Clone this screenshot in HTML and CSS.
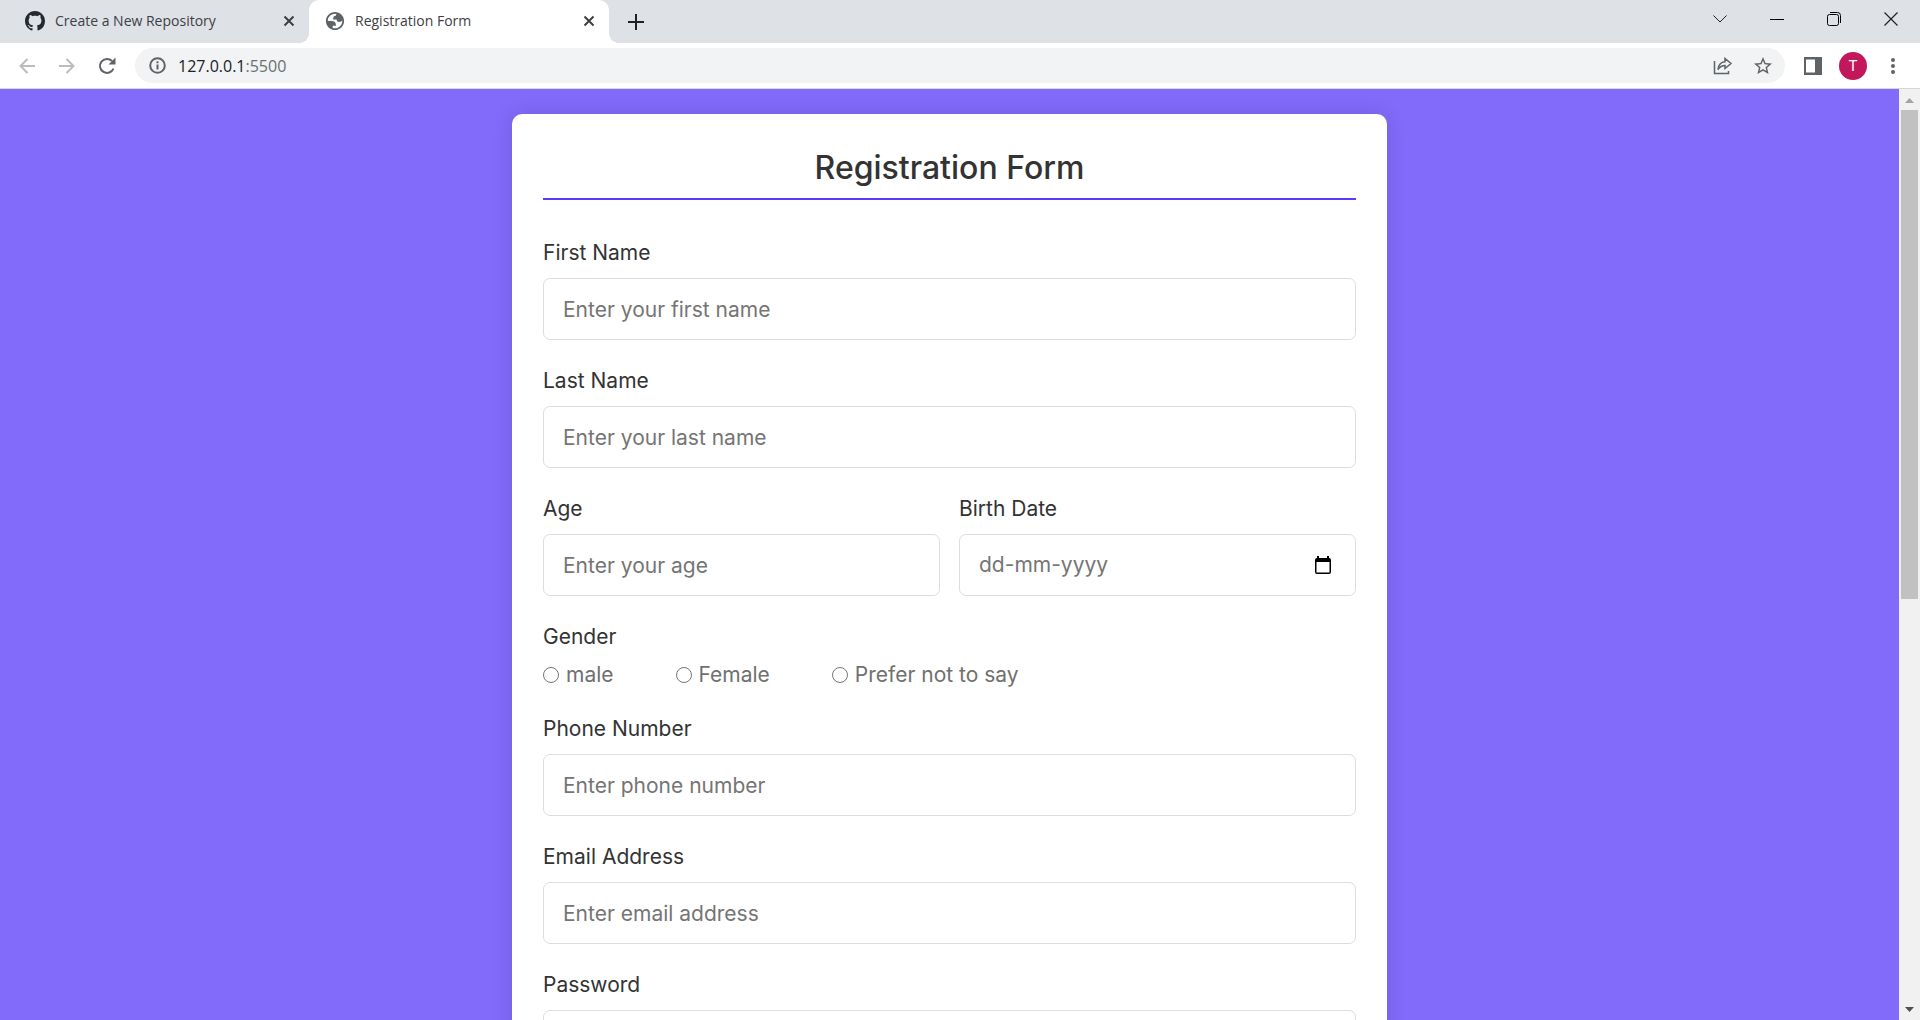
FILE: index.html
```html
<!DOCTYPE html>
<html lang="en">
<head>
<meta charset="utf-8">
<title>Registration Form</title>
<link rel="stylesheet" href="styles.css">
</head>
<body>
<header class="browser">
  <div class="tab-strip">
    <div class="tab">
      <svg class="favicon" viewBox="0 0 16 16" fill="#24292f"><path d="M8 0C3.58 0 0 3.58 0 8c0 3.54 2.29 6.53 5.47 7.59.4.07.55-.17.55-.38 0-.19-.01-.82-.01-1.49-2.01.37-2.53-.49-2.69-.94-.09-.23-.48-.94-.82-1.13-.28-.15-.68-.52-.01-.53.63-.01 1.08.58 1.23.82.72 1.21 1.87.87 2.33.66.07-.52.28-.87.51-1.07-1.78-.2-3.64-.89-3.64-3.95 0-.87.31-1.59.82-2.15-.08-.2-.36-1.02.08-2.12 0 0 .67-.21 2.2.82.64-.18 1.32-.27 2-.27s1.36.09 2 .27c1.53-1.04 2.2-.82 2.2-.82.44 1.1.16 1.92.08 2.12.51.56.82 1.27.82 2.15 0 3.07-1.87 3.75-3.65 3.95.29.25.54.73.54 1.48 0 1.07-.01 1.93-.01 2.2 0 .21.15.46.55.38A8.01 8.01 0 0 0 16 8c0-4.42-3.58-8-8-8z"/></svg>
      <span class="tab-title">Create a New Repository</span>
      <button class="icon-button" type="button" aria-label="Close tab"><svg class="close" viewBox="0 0 12 12"><path d="M1.500 1.500l9 9M10.500 1.500l-9 9"/></svg></button>
    </div>
    <div class="tab tab-active">
      <svg class="favicon" viewBox="1 1 22 22" fill="#5f6368"><path fill-rule="evenodd" d="M12 2C6.480 2 2 6.480 2 12s4.480 10 10 10 10-4.480 10-10S17.520 2 12 2zM4 12h4.400c3.407.022 4.922 1.730 4.543 5.127H9.488v2.470a8.004 8.004 0 0 0 10.498-8.083C19.327 12.504 18.332 13 17 13c-2.137 0-3.206-.916-3.206-2.750h-3.748c-.274-2.728.683-4.092 2.870-4.092 0-.975.327-1.597.811-1.970A8.004 8.004 0 0 0 4 12z"/></svg>
      <span class="tab-title">Registration Form</span>
      <button class="icon-button" type="button" aria-label="Close tab"><svg class="close" viewBox="0 0 12 12"><path d="M1.500 1.500l9 9M10.500 1.500l-9 9"/></svg></button>
    </div>
    <button class="icon-button new-tab" type="button" aria-label="New tab"><svg width="16" height="16" viewBox="0 0 16 16" stroke="#202124" stroke-width="2"><path d="M8 0v16M0 8h16"/></svg></button>
    <div class="window-controls">
      <button class="icon-button" type="button" aria-label="Search tabs"><svg width="14" height="14" viewBox="0 0 14 14" fill="none" stroke="#202124"><path d="M.5 3.500L7 10l6.500-6.500"/></svg></button>
      <button class="icon-button" type="button" aria-label="Minimize"><svg width="14" height="14" viewBox="0 0 14 14" stroke="#000"><path d="M0 7.500h14"/></svg></button>
      <button class="icon-button" type="button" aria-label="Restore"><svg width="14" height="14" viewBox="0 0 14 14" fill="none" stroke="#000"><rect x=".5" y="2.500" width="11" height="11" rx="2"/><path d="M3 .5h7.500a3 3 0 0 1 3 3V11"/></svg></button>
      <button class="icon-button" type="button" aria-label="Close window"><svg width="14" height="14" viewBox="0 0 14 14" stroke="#202124" stroke-width="1.200"><path d="M.5.5l13 13M13.500.5l-13 13"/></svg></button>
    </div>
  </div>
  <div class="toolbar">
    <nav class="tools" aria-label="History">
      <button class="icon-button" type="button" aria-label="Back" disabled><svg width="16" height="16" viewBox="0 0 16 16" fill="none" stroke="#babcbe" stroke-width="2"><path d="M16 8H1.500M8.500 1L1.500 8l7 7"/></svg></button>
      <button class="icon-button" type="button" aria-label="Forward" disabled><svg width="16" height="16" viewBox="0 0 16 16" fill="none" stroke="#babcbe" stroke-width="2"><path d="M0 8h14.500M7.500 1l7 7-7 7"/></svg></button>
      <button class="icon-button" type="button" aria-label="Reload"><svg width="18" height="18" viewBox="0 0 18 18" fill="none" stroke="#5f6368" stroke-width="2"><path d="M15.500 11.500A7 7 0 1 1 14 4"/><path d="M17.500.5v7h-7z" fill="#5f6368" stroke="none"/></svg></button>
    </nav>
    <div class="address-bar">
      <svg width="17" height="17" viewBox="0 0 17 17" fill="none" stroke="#5f6368" stroke-width="2"><circle cx="8.500" cy="8.500" r="7.300"/><path d="M8.500 7.500v5M8.500 4.300v2"/></svg>
      <div class="address" role="textbox" contenteditable="true" spellcheck="false" aria-label="Address">127.0.0.1<span class="port">:5500</span></div>
      <button class="icon-button" type="button" aria-label="Share"><svg width="20" height="18" viewBox="0 0 20 18" fill="none" stroke="#5f6368" stroke-width="1.500"><path d="M1.500 4v12.500h14V14M5 12.500c.5-5 3-7.500 7-7.800V1.500l6 5-6 5V8.500c-3 0-5 1-7 4z"/></svg></button>
      <button class="icon-button" type="button" aria-label="Bookmark"><svg width="18" height="18" viewBox="2 2 20 20" fill="#5f6368"><path d="M22 9.240l-7.190-.62L12 2 9.190 8.630 2 9.240l5.460 4.730L5.820 21 12 17.270 18.180 21l-1.630-7.030L22 9.240zM12 15.400l-3.760 2.270 1-4.280-3.320-2.880 4.380-.38L12 6.100l1.710 4.040 4.380.38-3.320 2.880 1 4.280L12 15.400z"/></svg></button>
    </div>
    <div class="tools">
      <button class="icon-button" type="button" aria-label="Side panel"><svg width="18" height="18" viewBox="0 0 18 18" fill="#5f6368"><path d="M0 0h18v18H0zM2 2.500v13h9v-13z" fill-rule="evenodd"/></svg></button>
      <button class="icon-button" type="button" aria-label="Profile"><span class="avatar">T</span></button>
      <button class="icon-button" type="button" aria-label="Menu"><svg width="4" height="16" viewBox="0 0 4 16" fill="#5f6368"><circle cx="2" cy="2" r="2"/><circle cx="2" cy="8" r="2"/><circle cx="2" cy="14" r="2"/></svg></button>
    </div>
  </div>
</header>
<div class="viewport">
  <main class="page">
    <form class="card">
      <h1 class="title">Registration Form</h1>
      <div class="field">
        <label class="label" for="first-name">First Name</label>
        <input class="input" id="first-name" type="text" placeholder="Enter your first name">
      </div>
      <div class="field">
        <label class="label" for="last-name">Last Name</label>
        <input class="input" id="last-name" type="text" placeholder="Enter your last name">
      </div>
      <div class="columns">
        <div class="field">
          <label class="label" for="age">Age</label>
          <input class="input" id="age" type="text" inputmode="numeric" placeholder="Enter your age">
        </div>
        <div class="field">
          <label class="label" for="birth-date">Birth Date</label>
          <div class="input date">
            <input class="date-text" id="birth-date" type="text" placeholder="dd-mm-yyyy">
            <button class="icon-button" type="button" aria-label="Choose date"><svg width="16" height="18" viewBox="0 0 16 18"><path d="M2 0h2v2h8V0h2v2a2 2 0 0 1 2 2v12a2 2 0 0 1-2 2H2a2 2 0 0 1-2-2V4a2 2 0 0 1 2-2zM1.500 6v10.500h13V6z" fill-rule="evenodd"/></svg></button>
          </div>
        </div>
      </div>
      <fieldset class="field">
        <legend class="label">Gender</legend>
        <div class="choices">
          <label class="choice"><input class="radio" type="radio" name="gender">male</label>
          <label class="choice"><input class="radio" type="radio" name="gender">Female</label>
          <label class="choice"><input class="radio" type="radio" name="gender">Prefer not to say</label>
        </div>
      </fieldset>
      <div class="field">
        <label class="label" for="phone">Phone Number</label>
        <input class="input" id="phone" type="tel" placeholder="Enter phone number">
      </div>
      <div class="field">
        <label class="label" for="email">Email Address</label>
        <input class="input" id="email" type="email" placeholder="Enter email address">
      </div>
      <div class="field">
        <label class="label" for="password">Password</label>
        <input class="input" id="password" type="password">
      </div>
    </form>
  </main>
  <div class="scrollbar" aria-hidden="true">
    <svg class="arrow" viewBox="0 0 21 21" fill="#a3a3a3"><path d="M6 14l4.500-5 4.500 5z"/></svg>
    <div class="track"><div class="thumb"></div></div>
    <svg class="arrow" viewBox="0 0 21 21" fill="#505050"><path d="M6 8l4.500 5L15 8z"/></svg>
  </div>
</div>
</body>
</html>
```
FILE: styles.css
```css
* {
  box-sizing: border-box;
}

body {
  margin: 0;
  height: 100vh;
  display: flex;
  flex-direction: column;
  overflow: hidden;
  font-family: Inter, "Liberation Sans", sans-serif;
}

button,
input {
  font: inherit;
}

.icon-button {
  display: flex;
  align-items: center;
  justify-content: center;
  padding: 0;
  border: 0;
  background: none;
  color: inherit;
}

/* Browser frame */

.browser {
  flex: none;
  font-family: "Open Sans", "Noto Sans", sans-serif;
  color: #3c4043;
}

.tab-strip {
  display: flex;
  height: 43px;
  padding-left: 9px;
  background: #dee1e6;
}

.tab {
  display: flex;
  align-items: center;
  gap: 10px;
  width: 300px;
  padding: 0 14px 2px 16px;
  font-size: 14px;
}

.tab-active {
  position: relative;
  border-radius: 10px 10px 0 0;
  background: #fff;
}

.tab-active::before,
.tab-active::after {
  content: "";
  position: absolute;
  bottom: 0;
  width: 10px;
  height: 10px;
}

.tab-active::before {
  right: 100%;
  background: radial-gradient(circle at 0 0, #dee1e6 10px, #fff 10px);
}

.tab-active::after {
  left: 100%;
  background: radial-gradient(circle at 100% 0, #dee1e6 10px, #fff 10px);
}

.favicon {
  width: 20px;
  height: 20px;
}

.tab-title {
  flex: 1;
}

.close {
  width: 12px;
  height: 12px;
  stroke: #3c4043;
  stroke-width: 2;
}

.new-tab {
  width: 54px;
}

.window-controls {
  display: flex;
  margin-left: auto;
  padding-right: 1px;
}

.window-controls .icon-button {
  width: 57px;
  height: 37px;
}

.toolbar {
  display: flex;
  gap: 8px;
  padding: 5px 7px;
  border-bottom: 1px solid #d5d7da;
  background: #fff;
}

.tools {
  display: flex;
}

.tools .icon-button,
.address-bar .icon-button {
  width: 40px;
}

.address-bar {
  flex: 1;
  display: flex;
  align-items: center;
  height: 35px;
  padding: 0 2px 0 14px;
  border-radius: 18px;
  background: #f1f3f4;
}

.address {
  flex: 1;
  padding-left: 12px;
  font-size: 16px;
  color: #202124;
}

.port {
  color: #6b6f73;
}

.avatar {
  width: 28px;
  border-radius: 50%;
  background: #c2185b;
  font-family: Roboto, sans-serif;
  font-size: 15px;
  line-height: 28px;
  color: #fff;
}

/* Page */

.viewport {
  flex: 1;
  min-height: 0;
  display: flex;
}

.page {
  flex: 1;
  overflow: hidden;
  padding: 25px;
  background: #826afb;
}

.card {
  max-width: 875px;
  margin: 0 auto;
  padding: 32px 31px;
  border-radius: 10px;
  background: #fff;
  box-shadow: 0 0 20px rgba(0, 0, 0, 0.12);
  font-size: 21px;
  line-height: 26px;
  color: #333;
}

.title {
  margin: 0 0 40px;
  padding-bottom: 8px;
  border-bottom: 2px solid #5a3bf6;
  font-size: 32px;
  font-weight: 500;
  line-height: 44px;
  text-align: center;
}

.field {
  margin: 0 0 28px;
  padding: 0;
  border: 0;
}

.label {
  display: block;
  margin-bottom: 12px;
  padding: 0;
}

.input {
  display: block;
  width: 100%;
  height: 62px;
  padding: 0 19px;
  border: 1px solid #ddd;
  border-radius: 7px;
  background: #fff;
  color: #707070;
}

.input::placeholder,
.date-text::placeholder {
  color: #757575;
}

.columns {
  display: grid;
  grid-template-columns: 1fr 1fr;
  gap: 19px;
}

.date {
  display: flex;
  align-items: center;
  padding-right: 24px;
}

.date-text {
  flex: 1;
  min-width: 0;
  padding: 0;
  border: 0;
  background: none;
}

.choices {
  display: flex;
  gap: 62px;
}

.choice {
  display: flex;
  align-items: center;
  gap: 7px;
  color: #707070;
}

.radio {
  width: 16px;
  height: 16px;
  margin: 0;
}

/* Scrollbar */

.scrollbar {
  display: flex;
  flex-direction: column;
  width: 21px;
  background: #f1f1f1;
}

.arrow {
  width: 21px;
  height: 21px;
}

.track {
  flex: 1;
  padding: 0 2px;
}

.thumb {
  height: 55%;
  background: #c1c1c1;
}
```
